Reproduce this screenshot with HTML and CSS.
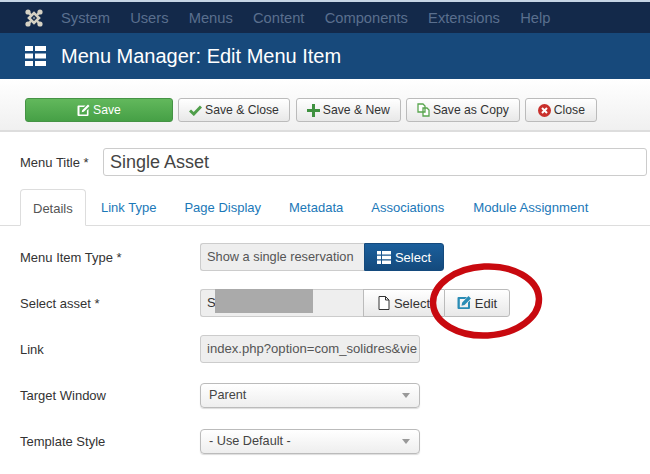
FILE: index.html
```html
<!DOCTYPE html>
<html lang="en">
<head>
<meta charset="utf-8">
<title>Menu Manager: Edit Menu Item</title>
<link rel="stylesheet" href="styles.css">
</head>
<body>
<nav class="topnav">
  <svg class="joomla" width="18" height="18" viewBox="0 0 18 18"><path fill="none" stroke="#d6d2c4" stroke-width="2.600" d="M4 9 9 4 14 9 9 14Z"/><path fill="none" stroke="#d6d2c4" stroke-width="2.400" d="M3 3 6 6M15 3 12 6M3 15 6 12M15 15 12 12"/><g fill="#d6d2c4"><circle cx="3" cy="3" r="2.600"/><circle cx="15" cy="3" r="2.600"/><circle cx="3" cy="15" r="2.600"/><circle cx="15" cy="15" r="2.600"/></g><circle cx="9" cy="9" r="1.200" fill="#7d8a94"/></svg>
  <a class="navlink">System</a><a class="navlink">Users</a><a class="navlink">Menus</a><a class="navlink">Content</a><a class="navlink">Components</a><a class="navlink">Extensions</a><a class="navlink">Help</a>
</nav>
<header class="titlebar">
  <svg class="listicon" width="21" height="20" viewBox="0 0 21 20"><path fill="#fff" d="M0 0h8v5H0zM10 0h11v5H10zM0 7.500h8v5H0zM10 7.500h11v5H10zM0 15h8v5H0zM10 15h11v5H10z"/></svg>
  <h1 class="pagetitle">Menu Manager: Edit Menu Item</h1>
</header>
<div class="toolbar">
  <button class="btn btn-save"><svg width="13" height="13" viewBox="0 0 13 13"><path fill="#fff" d="M1.500 1.500H8.500L6.900 3.100H2.500v7.400h7.400V6.500L11.500 5v6a1 1 0 0 1-1 1h-9a1 1 0 0 1-1-1V2.500a1 1 0 0 1 1-1ZM11 .5 12.500 2 6.800 7.800 4.700 8.300l.5-2.100Z"/></svg>Save</button>
  <button class="btn"><svg width="13" height="11" viewBox="0 0 13 11"><path fill="none" stroke="#4f9e4a" stroke-width="3" d="M1 5.500 4.800 9 12 1.500"/></svg>Save &amp; Close</button>
  <button class="btn btn-new"><svg width="13" height="13" viewBox="0 0 13 13"><path fill="#3f9140" d="M5 0h3v5h5v3H8v5H5V8H0V5h5Z"/></svg>Save &amp; New</button>
  <button class="btn"><svg width="13" height="14" viewBox="0 0 13 14"><path fill="#fff" stroke="#5aa64f" stroke-width="1.300" d="M1 1h5l2 2v6H1ZM6 5h4l2 2v6H6Z"/></svg>Save as Copy</button>
  <button class="btn btn-close"><svg width="13" height="13" viewBox="0 0 13 13"><circle cx="6.500" cy="6.500" r="6.500" fill="#c9302c"/><path stroke="#fff" stroke-width="2" d="M4 4l5 5M9 4l-5 5"/></svg>Close</button>
</div>
<main class="content">
  <div class="titlerow">
    <label class="titlelabel">Menu Title *</label>
    <div class="titleinput">Single Asset</div>
  </div>
  <ul class="tabs">
    <li class="tab tab-active">Details</li>
    <li class="tab">Link Type</li>
    <li class="tab">Page Display</li>
    <li class="tab">Metadata</li>
    <li class="tab">Associations</li>
    <li class="tab">Module Assignment</li>
  </ul>
  <div class="row">
    <label class="rowlabel">Menu Item Type *</label>
    <div class="group">
      <div class="readonly w-type">Show a single reservation</div>
      <button class="groupbtn groupbtn-blue"><svg width="14" height="13" viewBox="0 0 14 13"><path fill="#fff" d="M0 0h4v3.500H0zM5 0h9v3.500H5zM0 4.750h4v3.500H0zM5 4.750h9v3.500H5zM0 9.500h4V13H0zM5 9.500h9V13H5z"/></svg>Select</button>
    </div>
  </div>
  <div class="row">
    <label class="rowlabel">Select asset *</label>
    <div class="group">
      <div class="readonly w-asset">S<span class="redact"></span></div>
      <button class="groupbtn groupbtn-mid"><svg width="12" height="14" viewBox="0 0 12 14"><path fill="#fff" stroke="#333" stroke-width="1" d="M1 .5h6.500L11 4v9.500H1ZM7.500.5V4H11"/></svg>Select</button>
      <button class="groupbtn groupbtn-end"><svg width="14" height="14" viewBox="0 0 14 14"><path fill="#2a8cb5" d="M1.500 1H10L8 3H2.800v8.200H11V6.500L13 4.500V12a1 1 0 0 1-1 1H1.500a1 1 0 0 1-1-1V2a1 1 0 0 1 1-1ZM11.500 0 14 2.500 7.500 9 4.500 9.700l.7-3.100Z"/></svg>Edit</button>
    </div>
  </div>
  <div class="row">
    <label class="rowlabel">Link</label>
    <div class="readonly w-link">index.php?option=com_solidres&amp;vie</div>
  </div>
  <div class="row">
    <label class="rowlabel">Target Window</label>
    <div class="select">Parent<span class="caret"></span></div>
  </div>
  <div class="row">
    <label class="rowlabel">Template Style</label>
    <div class="select">- Use Default -<span class="caret"></span></div>
  </div>
</main>
<svg class="oval" width="120" height="80" viewBox="0 0 120 80"><ellipse cx="60" cy="40" rx="53" ry="34.500" fill="none" stroke="#c8090f" stroke-width="6.500" transform="rotate(-3 60 40)"/></svg>
</body>
</html>
```
FILE: styles.css
```css
* { box-sizing: border-box; }
html, body { margin: 0; padding: 0; }
body {
  position: relative;
  width: 650px;
  height: 474px;
  overflow: hidden;
  background: #fff;
  font-family: "Liberation Sans", Arial, sans-serif;
  font-size: 13px;
  color: #333;
}
.topnav {
  height: 33px;
  border-top: 2px solid #c5d5e5;
  background: #13294a;
  display: flex;
  align-items: center;
  padding-left: 25px;
}
.joomla { margin-right: 18px; flex: none; }
.navlink { color: #5a6f8e; font-size: 14.700px; margin-right: 20.200px; }
.titlebar {
  height: 46px;
  background: #17497b;
  display: flex;
  align-items: center;
  padding-left: 25px;
}
.listicon { margin-right: 15px; flex: none; }
.pagetitle { margin: 0; color: #fff; font-size: 20px; font-weight: 400; }
.toolbar {
  height: 53px;
  padding: 19px 25px 0;
  display: flex;
  gap: 5px;
  background: linear-gradient(#fff, #f0f0f0);
  border-bottom: 2px solid #ddd;
}
.btn {
  height: 24px;
  padding: 0 10px;
  display: flex;
  align-items: center;
  gap: 3px;
  font: 12.200px "Liberation Sans", Arial, sans-serif;
  color: #333;
  background: linear-gradient(#fff, #e8e8e8);
  border: 1px solid #bbb;
  border-radius: 3px;
}
.btn-save {
  width: 148px;
  justify-content: center;
  color: #fff;
  background: linear-gradient(#62b85c, #46a046);
  border-color: #459345;
}
.btn-new { margin-left: 1px; }
.btn-close { padding: 0 11px 0 12px; }
.content { padding: 15px 0 0 20px; }
.titlerow { display: flex; align-items: center; height: 30px; }
.titlelabel { width: 83px; font-size: 13px; flex: none; }
.titleinput {
  width: 544px;
  height: 28px;
  padding-left: 6px;
  line-height: 26px;
  font-size: 18px;
  color: #444;
  border: 1px solid #ccc;
  border-radius: 3px;
}
.tabs {
  display: flex;
  margin: 12px 0 0 -20px;
  padding: 0 0 0 20px;
  height: 37px;
  list-style: none;
  border-bottom: 1px solid #ddd;
}
.tab { padding: 11px 14px 0; height: 36px; color: #1b78b8; font-size: 13px; }
.tab-active {
  width: 66px;
  height: 37px;
  margin-right: 1px;
  padding: 11px 0 0 12px;
  color: #555;
  background: #fff;
  border: 1px solid #ddd;
  border-bottom-color: #fff;
  border-radius: 4px 4px 0 0;
}
.tab:last-child { padding-left: 15px; font-size: 13.200px; }
.row { display: flex; align-items: center; height: 28px; margin-top: 18px; }
.tabs + .row { margin-top: 17px; }
.rowlabel { width: 180px; font-size: 13px; flex: none; }
.group { display: flex; }
.readonly {
  position: relative;
  height: 28px;
  padding-left: 6px;
  line-height: 26px;
  color: #555;
  font-size: 13px;
  white-space: nowrap;
  overflow: hidden;
  background: #eee;
  border: 1px solid #ccc;
  border-radius: 3px;
}
.w-type { width: 164px; border-radius: 3px 0 0 3px; border-right: 0; font-size: 12.800px; }
.w-asset { width: 163px; border-radius: 3px 0 0 3px; border-right: 0; overflow: visible; color: #333; }
.w-link { width: 220px; font-size: 13.100px; }
.redact { position: absolute; left: 14px; top: -1px; width: 98px; height: 24px; background: #aaa; }
.groupbtn {
  height: 28px;
  display: flex;
  align-items: center;
  justify-content: center;
  gap: 4px;
  font: 13px "Liberation Sans", Arial, sans-serif;
  border: 1px solid #bbb;
  color: #333;
  background: linear-gradient(#fff, #e8e8e8);
  padding: 0;
}
.groupbtn-blue {
  width: 80px;
  color: #fff;
  background: linear-gradient(#1b5f9c, #144a7d);
  border-color: #144a7d;
  border-radius: 0 3px 3px 0;
}
.groupbtn-mid { width: 81px; border-right: 0; }
.groupbtn-end { width: 66px; border-radius: 0 3px 3px 0; }
.select {
  position: relative;
  width: 220px;
  height: 25px;
  padding-left: 8px;
  line-height: 22px;
  font-size: 12.700px;
  color: #444;
  background: linear-gradient(#fff, #eee);
  border: 1px solid #bbb;
  border-radius: 4px;
  box-shadow: 0 1px 1px #ddd;
}
.caret {
  position: absolute;
  right: 9px;
  top: 9px;
  border-left: 4px solid transparent;
  border-right: 4px solid transparent;
  border-top: 5px solid #999;
}
.oval { position: absolute; left: 426px; top: 261px; }
```
